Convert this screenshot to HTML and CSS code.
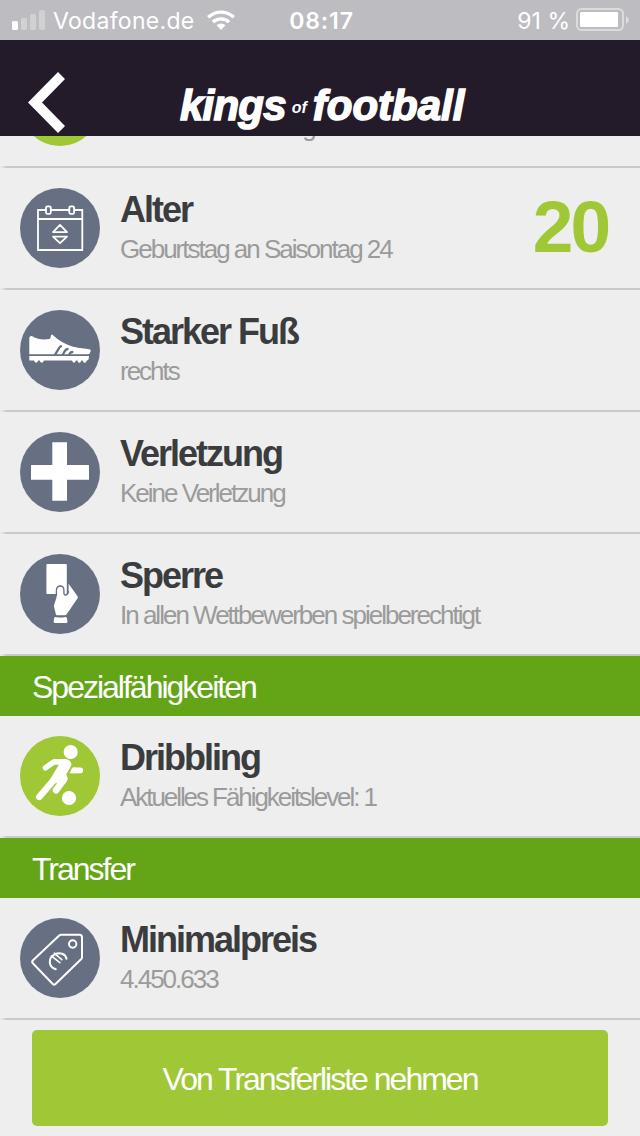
FILE: index.html
```html
<!DOCTYPE html>
<html lang="de">
<head>
<meta charset="utf-8">
<title>kings of football</title>
<link rel="stylesheet" href="styles.css">
</head>
<body>
<div class="status">
  <div class="status-left">
    <svg class="signal" width="34" height="20" viewBox="0 0 34 20" fill="#fff"><rect y="11" width="6" height="9" rx="1.5"/><g opacity=".3"><rect x="9" y="8" width="6" height="12" rx="1.5"/><rect x="18" y="4" width="6" height="16" rx="1.5"/><rect x="27" width="6" height="20" rx="1.5"/></g></svg>
    <span class="carrier">Vodafone.de</span>
    <svg class="wifi" width="28" height="20" viewBox="0 0 28 20" fill="none" stroke="#fff" stroke-width="3.4"><path d="M1.2 7.3a18.5 18.5 0 0 1 25.6 0M5.9 12.1a11.7 11.7 0 0 1 16.2 0"/><path d="M14 20l-4.5-4.7a6.3 6.3 0 0 1 9 0z" fill="#fff" stroke="none"/></svg>
  </div>
  <div class="time">08:17</div>
  <div class="status-right">
    <span class="percent">91 %</span>
    <svg width="54" height="24" viewBox="0 0 54 24"><rect x="1" y="1" width="46" height="21" rx="4.5" fill="none" stroke="#fff" stroke-opacity=".45" stroke-width="2"/><rect x="4" y="4" width="38" height="15" rx="1" fill="#fff"/><path d="M50 8q3 1.500 3 4t-3 4z" fill="#fff" opacity=".45"/></svg>
  </div>
</div>
<header class="header">
  <svg class="back" width="38" height="61" viewBox="0 0 38 61"><path d="M30 0l7 7-23 23.500L37 54l-7 7L0 30.500z" fill="#fff"/></svg>
  <div class="logo"><span class="kings">kings</span><span class="of">of</span><span class="football">football</span></div>
</header>
<main class="list">
  <div class="row row-scrolled">
    <svg class="icon lime" viewBox="0 0 80 80"><circle cx="40" cy="40" r="40"/></svg>
    <div class="text"><p>Persönliche Wertung</p></div>
  </div>
  <div class="row">
    <svg class="icon slate" viewBox="0 0 80 80"><circle cx="40" cy="40" r="40"/><g fill="none" stroke="#fff" stroke-width="1.8"><path d="M26 22H18v40h44.300V22H54.300M31 22h18M18 31h44.300"/><rect x="26" y="18.300" width="4.800" height="7.600" rx="1.500"/><rect x="49.300" y="18.300" width="4.800" height="7.600" rx="1.500"/><path d="M40 36.900l7 7.200H33zM33 48.600h14l-7 6.600z" stroke-linejoin="round"/></g></svg>
    <div class="text"><h2>Alter</h2><p>Geburtstag an Saisontag 24</p></div>
    <div class="value">20</div>
  </div>
  <div class="row">
    <svg class="icon slate" viewBox="0 0 80 80"><circle cx="40" cy="40" r="40"/><path d="M9.300 44.300V27.500Q9.800 25.700 12 26C16 29.300 23 30 29.500 29Q30.700 28 31 25.500Q31.500 23.800 33 25.200C38.500 30.500 46 34.500 53 36.800C60 38.600 65 38.400 69.500 39.300Q71 39.700 70.700 41.600Q70 44.300 67.300 44.300z" fill="#fff"/><path d="M9.300 45.900H69l-.3 3.100q-.4 1.400-1.900 1.400l-1.300 2.300h-1.600l-1.300-2.300h-1.300l-1.200 2.300h-1.500l-1.300-2.300h-1.300l-1.200 2.100h-1.600l-1.300-2.100H24l-1.200 2.200h-2l-1.200-2.200h-1.300l-1.200 2.200h-1.900L14 50.400h-4.700z" fill="#fff"/><path d="M41 36.200q-1.300.6-2 2l-4 6.600M47.500 39q-1.600.3-2.500 1.800l-2.300 4M52.300 42q-1.500.2-2.300 1.300l-1 1.500" fill="none" stroke="#677082" stroke-width="2.300" stroke-linecap="round"/></svg>
    <div class="text"><h2>Starker Fuß</h2><p>rechts</p></div>
  </div>
  <div class="row">
    <svg class="icon slate" viewBox="0 0 80 80"><circle cx="40" cy="40" r="40"/><path d="M32.300 10.300H47V33H69v14.700H47v21H32.300v-21H11V33h21.300z" fill="#fff"/></svg>
    <div class="text"><h2>Verletzung</h2><p>Keine Verletzung</p></div>
  </div>
  <div class="row">
    <svg class="icon slate" viewBox="0 0 80 80"><circle cx="40" cy="40" r="40"/><rect x="26.400" y="10" width="20.400" height="30" rx="1" fill="#fff"/><path d="M36.500 43.500V36Q36.800 32.200 40.300 32.200Q43.700 32.200 43.800 36V39.500Q44.400 41.200 46.500 40.700Q48.600 40 48.600 37V29.800L57.700 42.500Q58 43.300 57.600 44.200L46.500 60.500Q46 61.200 45 61.200H37.200Q36 61.200 35.800 60L34 52.700Q33.900 51.500 34.300 50.300z" fill="#fff"/><path d="M36.400 42V36Q36.800 32 40.300 32Q43.800 32 43.900 36V39.500Q44.500 41.500 46.500 40.900Q48.500 40 48.500 37" fill="none" stroke="#677082" stroke-width="1.300"/><path d="M35.500 63Q40.500 64.200 45.500 63Q46.500 63 46.900 64L47.500 67.500Q47.500 69 46 69H35Q33.600 69 33.600 67.500L34.200 64Q34.600 63 35.500 63z" fill="#fff"/></svg>
    <div class="text"><h2>Sperre</h2><p>In allen Wettbewerben spielberechtigt</p></div>
  </div>
  <h1 class="section">Spezialfähigkeiten</h1>
  <div class="row">
    <svg class="icon lime" viewBox="0 0 80 80"><circle cx="40" cy="40" r="40"/><g fill="#fff"><circle cx="50.700" cy="16" r="7.100"/><circle cx="49" cy="62" r="7.100"/><path d="M33 23.300H45.500Q50.500 23.500 51.500 28.300Q51 31 46.300 38.200L47.800 42.500L45 48L34 47L28 47L35 35L39 28.500z"/></g><g fill="none" stroke="#fff" stroke-width="5.600" stroke-linecap="round" stroke-linejoin="round"><path d="M25.500 31.800l8.300-5.800H45M54 34.400h6.300"/><path d="M39 38L19.300 60.800" stroke-width="6.600"/><path d="M44 43.500L36 54.300" stroke-width="6.600"/></g><path d="M49.500 37.200l3.400-5.600h3v5.600z" fill="#fff"/></svg>
    <div class="text"><h2>Dribbling</h2><p class="tight">Aktuelles Fähigkeitslevel: 1</p></div>
  </div>
  <h1 class="section">Transfer</h1>
  <div class="row">
    <svg class="icon slate" viewBox="0 0 80 80"><circle cx="40" cy="40" r="40"/><g fill="none" stroke="#fff" stroke-width="2" stroke-linejoin="round" stroke-linecap="round"><path d="M39.500 17.200Q40.200 16.700 41 16.700H59.500Q62 16.700 62 19.200V39.200Q62 40.200 61.300 41L35.500 66Q34 67.300 32.500 65.800L12.800 45.300Q11.500 43.700 13 42.200z"/><circle cx="52.700" cy="26" r="3.700"/><path d="M35.800 51.300C27.500 48.500 28.500 39.500 34.500 36.700C39.500 34 45.500 35.500 46.500 40.700"/><path d="M31.500 38l8.300 6.700M34.300 35.200l7.500 6.400" stroke-width="1.700"/></g></svg>
    <div class="text"><h2>Minimalpreis</h2><p>4.450.633</p></div>
  </div>
  <button class="action">Von Transferliste nehmen</button>
</main>
</body>
</html>
```
FILE: styles.css
```css
* { box-sizing: border-box; margin: 0; padding: 0; }

body {
  width: 640px;
  height: 1136px;
  overflow: hidden;
  display: flex;
  flex-direction: column;
  background: #eeeeee;
  font-family: "Liberation Sans", Arial, sans-serif;
  letter-spacing: -2px;
}

.status {
  flex: none;
  height: 40px;
  display: grid;
  grid-template-columns: 1fr auto 1fr;
  align-items: center;
  padding: 0 10px 0 12px;
  background: #bdbcc1;
  color: #fff;
  font-family: Inter, sans-serif;
  font-size: 23px;
  letter-spacing: 0.3px;
}

.status-left { display: flex; align-items: center; }
.carrier { margin-left: 7px; width: 154px; white-space: nowrap; padding-top: 2px; }
.time { font-weight: 600; letter-spacing: 0.9px; padding: 2px 0 0 1px; }
.status-right { display: flex; align-items: center; justify-content: flex-end; gap: 6px; letter-spacing: 0; }
.percent { padding-top: 2px; }

.header {
  flex: none;
  height: 96px;
  display: flex;
  align-items: flex-start;
  padding: 32px 0 0 28px;
  background: #231b29;
  color: #fff;
}

.logo {
  display: flex;
  align-items: baseline;
  margin: 10px 0 0 114px;
  font-size: 42px;
  line-height: 48px;
  font-weight: bold;
  font-style: italic;
  letter-spacing: -0.8px;
}

.kings, .football { -webkit-text-stroke: 1.5px #fff; }
.football { letter-spacing: 0; }
.of { font-size: 16px; letter-spacing: 0; margin: 0 6px 0 6px; transform: translateY(-7px); }

.list { flex: 1; min-height: 0; overflow: hidden; }

.row {
  height: 122px;
  display: flex;
  align-items: flex-start;
  padding: 20px 32px 0 20px;
  background: linear-gradient(to right, #eeeeee, #c9c9c9 7px) left bottom / 100% 2px no-repeat;
}

.row-scrolled { margin-top: -90px; }
.row-scrolled .text { padding-top: 43px; letter-spacing: -2.45px; }

.icon { flex: none; width: 80px; height: 80px; }
.slate { fill: #677082; }
.lime { fill: #a0c735; }

.text { flex: 1; margin-left: 20px; }
.text h2 { padding-top: 1px; font-size: 36px; line-height: 42px; color: #3b3c3e; }
.text p { font-size: 26px; line-height: 30px; margin-top: 3px; color: #9b9b9b; }
.text .tight { letter-spacing: -2.06px; }

.value { margin-top: -1px; font-size: 73px; line-height: 80px; font-weight: bold; letter-spacing: -3px; color: #a0c735; }

.section {
  height: 60px;
  padding-left: 32px;
  background: #64a518;
  color: #fff;
  font-size: 32px;
  line-height: 62px;
  font-weight: normal;
}

.action {
  display: block;
  width: 576px;
  height: 96px;
  margin: 10px 32px;
  border: 0;
  border-radius: 5px;
  background: #a0c735;
  color: #fff;
  font: 32px "Liberation Sans", Arial, sans-serif;
  letter-spacing: -2px;
  padding-top: 2px;
}
```
